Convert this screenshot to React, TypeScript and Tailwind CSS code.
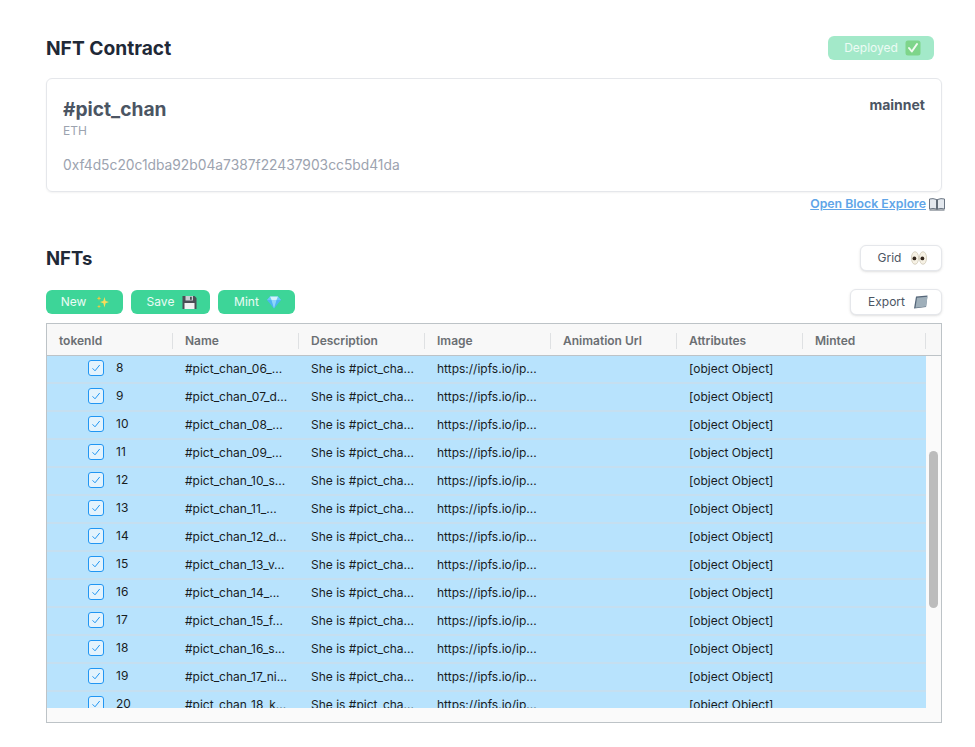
import React from "react";

const names = [
  "#pict_chan_06_...",
  "#pict_chan_07_d...",
  "#pict_chan_08_...",
  "#pict_chan_09_...",
  "#pict_chan_10_s...",
  "#pict_chan_11_...",
  "#pict_chan_12_d...",
  "#pict_chan_13_v...",
  "#pict_chan_14_...",
  "#pict_chan_15_f...",
  "#pict_chan_16_s...",
  "#pict_chan_17_ni...",
  "#pict_chan_18_k...",
];

const columns = ["tokenId", "Name", "Description", "Image", "Animation Url", "Attributes"];

const Sparkles = () => (
  <svg width="14" height="14" viewBox="0 0 14 14">
    <path d="M8.5 2 L9.6 6 L13 7 L9.6 8.2 L8.5 12.5 L7.3 8.2 L4 7 L7.3 6 Z" fill="#f7dc5a" />
    <path d="M3 1 L3.6 2.8 L5.2 3.4 L3.6 4 L3 5.8 L2.4 4 L0.8 3.4 L2.4 2.8 Z" fill="#f5c93f" />
    <path d="M3 9.5 L3.5 11 L5 11.5 L3.5 12 L3 13.5 L2.5 12 L1 11.5 L2.5 11 Z" fill="#f5c93f" />
  </svg>
);

const Floppy = () => (
  <svg width="15" height="15" viewBox="0 0 15 15">
    <path d="M0.5 1 H12.5 L14.5 3 V14 H0.5 Z" fill="#4a4f55" />
    <rect x="3.5" y="1" width="7.5" height="4.5" fill="#c9ced3" />
    <rect x="8" y="1.8" width="1.8" height="3" fill="#4a4f55" />
    <rect x="2.5" y="8" width="10" height="6" fill="#f2f2f2" />
  </svg>
);

const Gem = () => (
  <svg width="14" height="14" viewBox="0 0 14 14">
    <path d="M3 1.5 H11 L14 5 L7 13.5 L0 5 Z" fill="#4fb4f2" />
    <path d="M4.5 5 H9.5 L7 13.5 Z" fill="#8ed6fb" />
    <path d="M3 1.5 L4.5 5 H0 Z M11 1.5 L9.5 5 H14 Z" fill="#6cc6f7" />
    <path d="M3 1.5 H11 L9.5 5 H4.5 Z" fill="#d5f2fe" />
  </svg>
);

const Eyes = () => (
  <svg width="16" height="14" viewBox="0 0 16 14">
    <ellipse cx="4" cy="7" rx="3.6" ry="6.3" fill="#f6f1e4" stroke="#c9c2ae" strokeWidth="0.7" />
    <ellipse cx="12" cy="7" rx="3.6" ry="6.3" fill="#f6f1e4" stroke="#c9c2ae" strokeWidth="0.7" />
    <circle cx="3.4" cy="7.4" r="1.9" fill="#33261c" />
    <circle cx="11.4" cy="7.4" r="1.9" fill="#33261c" />
  </svg>
);

const Folder = () => (
  <svg width="15" height="14" viewBox="0 0 15 14">
    <path d="M3 1.5 L14.5 0.5 L13 12 L1 13.5 Z" fill="#56677a" />
    <path d="M4 2.8 L14.5 1.8 L13.2 11.5 L2.5 12.8 Z" fill="#9fafba" />
  </svg>
);

const CheckEmoji = () => (
  <svg width="16" height="16" viewBox="0 0 16 16">
    <rect x="0.5" y="0.5" width="15" height="15" rx="2.5" fill="#7ed58a" />
    <path d="M4 8 L6.8 11.5 L12 4" fill="none" stroke="#f1fbf1" strokeWidth="2" strokeLinecap="round" strokeLinejoin="round" />
  </svg>
);

const Book = () => (
  <svg width="16" height="13" viewBox="0 0 16 13">
    <path d="M0.5 1 Q4 0 7.5 1.5 V11 Q4 9.8 0.5 11 Z M8.5 1.5 Q12 0 15.5 1 V11 Q12 9.8 8.5 11 Z" fill="#e3e8ee" stroke="#6b7683" strokeWidth="1" />
    <path d="M7.5 1 H8.5 V12.5 H7.5 Z M0.5 11.5 H15.5 V12.5 H0.5 Z" fill="#59636f" />
  </svg>
);

const Check = () => (
  <div className="-mt-[2px] flex h-4 w-4 items-center justify-center rounded-[3px] border border-[#2196f3] bg-[#e3f3fd]">
    <svg width="10" height="10" viewBox="0 0 10 10">
      <path d="M1.5 5.3 L4 7.8 L8.7 2" fill="none" stroke="#2196f3" strokeWidth="1" />
    </svg>
  </div>
);

const App = () => {
  return (
    <div className="h-[747px] w-[975px] overflow-hidden bg-white pl-[46px] pt-[37px] font-['Inter',sans-serif]">
      <div className="flex h-6 w-[888px] items-center justify-between">
        <h1 className="-mt-[2px] text-[19.2px] font-bold leading-[22px] text-[#1f2937]">NFT Contract</h1>
        <button className="-mt-[2px] flex h-6 w-[106px] items-center justify-center gap-[7px] rounded-md bg-[#a3e9c9] pl-[3px] text-xs text-white/80">
          Deployed <CheckEmoji />
        </button>
      </div>

      <div className="mt-[17px] flex h-[114px] w-[896px] justify-between rounded-md border border-[#e5e7eb] px-4 pt-[18px] shadow-xs">
        <div>
          <div className="text-[19.2px] font-bold leading-6 text-[#4b5563]">#pict_chan</div>
          <div className="mt-[3px] text-xs leading-[14px] text-[#9ca3af]">ETH</div>
          <div className="mt-[18px] text-[13.8px] leading-[18px] text-[#9ca3af]">0xf4d5c20c1dba92b04a7387f22437903cc5bd41da</div>
        </div>
        <div className="-mt-[1px] text-sm font-bold leading-[18px] text-[#4b5563]">mainnet</div>
      </div>

      <div className="flex h-[22px] w-[899px] items-center justify-end gap-[3px] pt-[2px] text-[12.3px] font-semibold text-[#60a5e8]">
        <span className="underline">Open Block Explore</span>
        <Book />
      </div>

      <div className="mt-[31px] flex w-[896px] items-center justify-between">
        <h2 className="text-[18.5px] font-bold leading-6 text-[#1f2937]">NFTs</h2>
        <button className="flex h-[26px] w-[82px] items-center justify-center gap-[10px] rounded-md border border-[#e5e7eb] bg-white pl-[3px] text-xs text-[#4b5563] shadow-sm">
          Grid <Eyes />
        </button>
      </div>

      <div className="mt-[18px] flex w-[896px] items-center justify-between">
        <div className="flex gap-2">
          <button className="flex h-6 w-[77px] items-center justify-center gap-[10px] rounded-md bg-[#3dd598] pl-[2px] text-xs text-white/90">
            New <Sparkles />
          </button>
          <button className="flex h-6 w-[79px] items-center justify-center gap-2 rounded-md bg-[#3dd598] pl-[3px] text-xs text-white/90">
            Save <Floppy />
          </button>
          <button className="flex h-6 w-[77px] items-center justify-center gap-2 rounded-md bg-[#3dd598] pl-[2px] text-xs text-white/90">
            Mint <Gem />
          </button>
        </div>
        <button className="flex h-[26px] w-[92px] items-center justify-center gap-2 rounded-md border border-[#e5e7eb] bg-white pl-[4px] text-xs text-[#4b5563] shadow-sm">
          Export <Folder />
        </button>
      </div>

      <div className="mt-[8px] flex h-[400px] w-[896px] flex-col border border-[#bdc3c7] text-xs">
        <div className="flex h-[32px] shrink-0 items-center border-b border-[#bdc3c7] bg-[#f8f8f8] pt-[2px]">
          {columns.map((c) => (
            <div
              key={c}
              className="flex h-4 w-[126px] shrink-0 items-center border-r border-[#dfe1e3] pl-3 font-semibold text-[#6b6f73]"
            >
              {c}
            </div>
          ))}
          <div className="flex h-4 w-[123px] shrink-0 items-center border-r border-[#dfe1e3] pl-3 font-semibold text-[#6b6f73]">
            Minted
          </div>
        </div>
        <div className="flex min-h-0 flex-1">
          <div className="h-full flex-1 overflow-hidden">
            {names.map((n, i) => (
              <div key={n} className="flex h-[28px] items-center border-b-2 border-[#c5dff0] bg-[#b8e3fd] text-[#181d1f]">
                <div className="flex w-[126px] items-center pl-[41px]">
                  <Check />
                  <span className="ml-[12px] -mt-[2px]">{i + 8}</span>
                </div>
                <div className="w-[126px] pl-[12px]">{n}</div>
                <div className="w-[126px] pl-[12px]">She is #pict_cha...</div>
                <div className="w-[126px] pl-[12px]">https://ipfs.io/ip...</div>
                <div className="w-[126px]"></div>
                <div className="w-[126px] pl-[12px]">[object Object]</div>
              </div>
            ))}
          </div>
          <div className="w-[15px] shrink-0 bg-[#fafafa] pl-[3px] pt-[95px]">
            <div className="h-[157px] w-[9px] rounded-full bg-[#bcbcbc]"></div>
          </div>
        </div>
        <div className="h-[14px] shrink-0 bg-[#fafafa]"></div>
      </div>
    </div>
  );
};

export default App;
